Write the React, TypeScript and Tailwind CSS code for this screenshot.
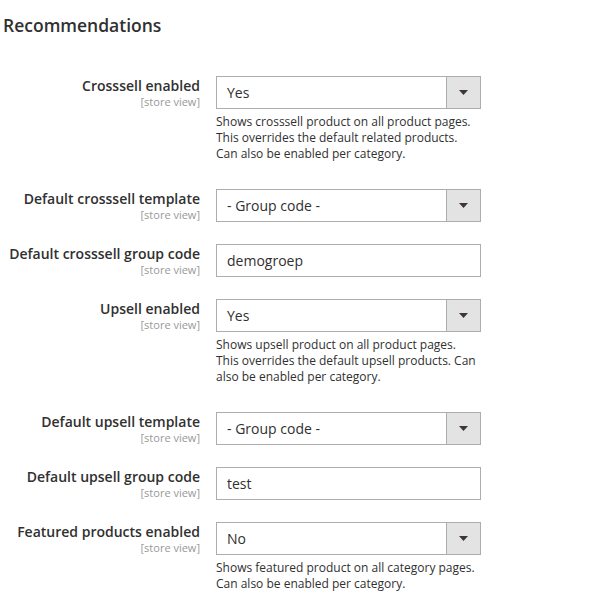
import React from 'react'

type Row = {
  label: string
  kind: 'select' | 'input'
  value: string
  note?: string[]
}

const rows: Row[] = [
  {
    label: 'Crosssell enabled',
    kind: 'select',
    value: 'Yes',
    note: [
      'Shows crosssell product on all product pages.',
      'This overrides the default related products.',
      'Can also be enabled per category.',
    ],
  },
  { label: 'Default crosssell template', kind: 'select', value: '- Group code -' },
  { label: 'Default crosssell group code', kind: 'input', value: 'demogroep' },
  {
    label: 'Upsell enabled',
    kind: 'select',
    value: 'Yes',
    note: [
      'Shows upsell product on all product pages.',
      'This overrides the default upsell products. Can',
      'also be enabled per category.',
    ],
  },
  { label: 'Default upsell template', kind: 'select', value: '- Group code -' },
  { label: 'Default upsell group code', kind: 'input', value: 'test' },
  {
    label: 'Featured products enabled',
    kind: 'select',
    value: 'No',
    note: ['Shows featured product on all category pages.', 'Can also be enabled per category.'],
  },
]

function Control({ row }: { row: Row }) {
  if (row.kind === 'input') {
    return (
      <div className="flex h-[33px] w-[265px] items-center border border-[#adadad] bg-white pl-[10px] text-[14px] text-[#303030]">
        {row.value}
      </div>
    )
  }
  return (
    <div className="flex h-[33px] w-[265px] border border-[#adadad] bg-white text-[14px] text-[#303030]">
      <div className="flex flex-1 items-center pl-[10px]">{row.value}</div>
      <div className="flex w-[34px] items-center justify-center border-l border-[#adadad] bg-[#e3e3e3]">
        <svg width="9" height="5" viewBox="0 0 9 5">
          <path d="M0 0h9L4.5 5z" fill="#41362f" />
        </svg>
      </div>
    </div>
  )
}

export default function App() {
  return (
    <div
      className="min-h-screen bg-white text-[#303030]"
      style={{ fontFamily: '"Open Sans", sans-serif' }}
    >
      <h2 className="pl-[3px] pt-[13px] text-[17.5px] font-semibold leading-[24px] text-[#303030]">
        Recommendations
      </h2>
      <div className="mt-[39px] flex flex-col gap-[22px]">
        {rows.map((row) => (
          <div key={row.label} className="flex gap-[16px]">
            <div className="w-[200px] shrink-0 text-right">
              <div className="text-[14px] font-semibold leading-[19px]">{row.label}</div>
              <div className="text-[11px] leading-[13px] text-[#999]">[store view]</div>
            </div>
            <div>
              <Control row={row} />
              {row.note && (
                <div className="mb-[5px] mt-[5px] text-[12px] leading-[16px] text-[#303030]">
                  {row.note.map((line) => (
                    <div key={line}>{line}</div>
                  ))}
                </div>
              )}
            </div>
          </div>
        ))}
      </div>
    </div>
  )
}
